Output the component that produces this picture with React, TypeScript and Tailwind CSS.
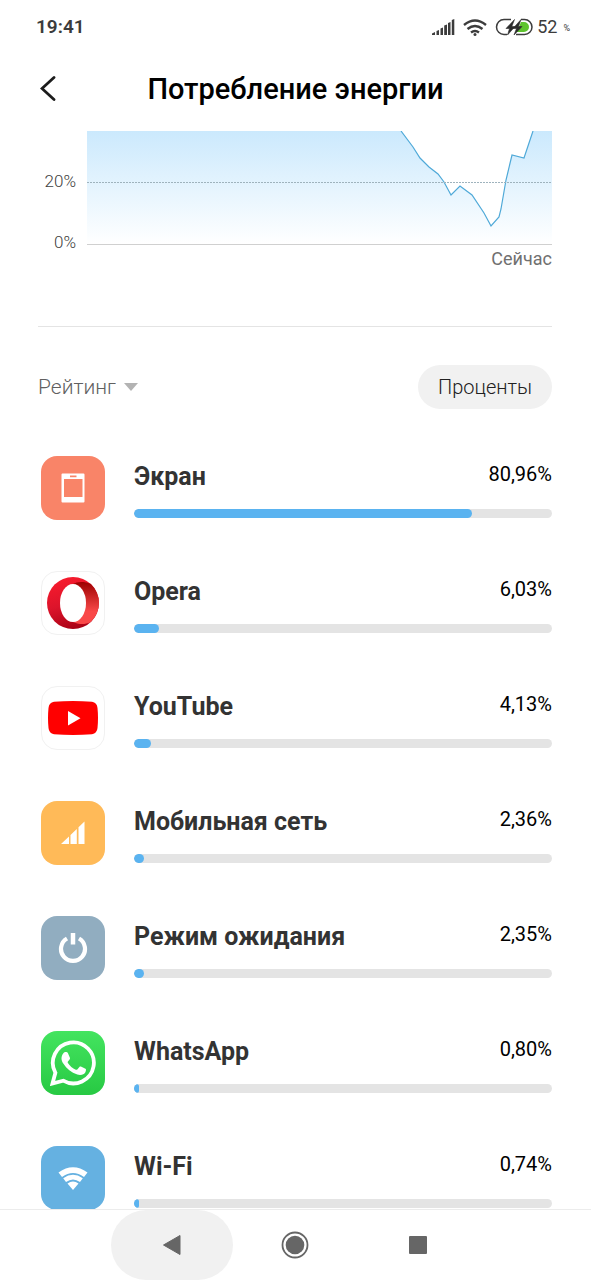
import type { ReactNode } from 'react';

interface UsageItem {
  name: string;
  percent: number;
  label: string;
  tile: string;
  icon: ReactNode;
}

function OperaIcon() {
  return (
    <svg viewBox="0 0 52 52" className="h-[52px] w-[52px]" aria-hidden="true">
      <defs>
        <linearGradient id="operaLeft" x1="0.3" y1="0" x2="0.6" y2="1">
          <stop offset="0" stopColor="#f81b2d" />
          <stop offset="0.5" stopColor="#dc142b" />
          <stop offset="1" stopColor="#a70014" />
        </linearGradient>
        <linearGradient id="operaRight" x1="0" y1="0" x2="0" y2="1">
          <stop offset="0" stopColor="#9c0000" />
          <stop offset="0.7" stopColor="#f94848" />
          <stop offset="1" stopColor="#f94848" />
        </linearGradient>
      </defs>
      <circle cx="26" cy="26" r="26" fill="url(#operaLeft)" />
      <path
        d="M26 7C30 4.500 37 4 43.500 6.800A26 26 0 0 1 43.500 45.200C38 47.800 31 47.500 26 45Z"
        fill="url(#operaRight)"
      />
      <ellipse cx="26" cy="26" rx="13" ry="19" fill="#fff" />
    </svg>
  );
}

function ScreenIcon() {
  return (
    <svg viewBox="0 0 24 30" className="h-[30px] w-6" aria-hidden="true">
      <path
        fillRule="evenodd"
        fill="#fff"
        d="M1.500 .5h21a1 1 0 0 1 1 1v27a1 1 0 0 1-1 1H1.500a1 1 0 0 1-1-1V1.500a1 1 0 0 1 1-1ZM9 2.500v1.800h6.500V2.500ZM3 6v18h18.500V6Z"
      />
    </svg>
  );
}

function YouTubeIcon() {
  return (
    <svg viewBox="0 0 50 34" className="h-[34px] w-[50px]" aria-hidden="true">
      <path
        d="M6 .8Q25-.8 44 .8Q49 1.500 49.500 7Q50.500 17 49.500 27Q49 32.500 44 33.200Q25 34.800 6 33.200Q1 32.500.5 27Q-.5 17 .5 7Q1 1.500 6 .8Z"
        fill="#f00"
      />
      <path d="M20 10v14.500l12.500-7.200Z" fill="#fff" />
    </svg>
  );
}

function MobileIcon() {
  return (
    <svg viewBox="0 0 24 24" className="h-6 w-6" fill="#fff" aria-hidden="true">
      <path d="M0 23L8 15.500V23ZM9.500 14L15.800 8V23H9.500ZM17.500 6.300L23.500 .5V23H17.500Z" />
    </svg>
  );
}

function PowerIcon() {
  return (
    <svg viewBox="0 0 30 30" className="h-[30px] w-[30px]" fill="none" stroke="#fff" aria-hidden="true">
      <path d="M9 5.500A12 12 0 1 0 21 5.500" strokeWidth="4.200" />
      <path d="M15 0v11.500" strokeWidth="4.500" />
    </svg>
  );
}

function WhatsAppIcon() {
  return (
    <svg viewBox="0 0 46 46" className="h-[46px] w-[46px]" aria-hidden="true">
      <path
        d="M2.500 43.500L5.400 32.800A20.500 20.500 0 1 1 13.200 40.700Z"
        fill="none"
        stroke="#fff"
        strokeWidth="3.800"
      />
      <path
        d="M13.200 13.500C14.200 12 15.800 11.800 17 12.200C17.800 12.500 18 13.200 18.400 14.200L19.900 17.800C20.200 18.600 19.900 19.200 19.400 19.800L17.900 21.600C17.500 22.100 17.600 22.500 17.900 23C19.800 26 22.500 28.300 25.800 29.700C26.400 30 26.900 29.900 27.300 29.400L29.400 26.900C29.800 26.400 30.300 26.300 30.900 26.500L35 28.500C35.700 28.900 36 29.100 36 29.700C35.900 31.500 35.200 33 33.800 33.900C31.800 35.200 29.600 35.300 27.300 34.600C21.300 32.800 16.700 29 13.300 23.600C10.800 19.900 11.100 16.200 13.200 13.500Z"
        fill="#fff"
      />
    </svg>
  );
}

function WifiTileIcon() {
  return (
    <svg viewBox="0 0 30 24" className="h-6 w-[30px]" fill="#fff" aria-hidden="true">
      <path d="M.5 6.500Q15-4 29.500 6.500L26 11Q15 3 4 11Z" />
      <path d="M5.200 12.300Q15 5.400 24.800 12.300L22 16Q15 11 8 16Z" />
      <path d="M9.500 17.500Q15 13.600 20.500 17.500L15 24Z" />
    </svg>
  );
}

const items: UsageItem[] = [
  { name: 'Экран', percent: 80.96, label: '80,96%', tile: 'bg-[#f98468]', icon: <ScreenIcon /> },
  { name: 'Opera', percent: 6.03, label: '6,03%', tile: 'border border-[#f1f1f1] bg-white', icon: <OperaIcon /> },
  { name: 'YouTube', percent: 4.13, label: '4,13%', tile: 'border border-[#f1f1f1] bg-white', icon: <YouTubeIcon /> },
  { name: 'Мобильная сеть', percent: 2.36, label: '2,36%', tile: 'bg-[#ffba58]', icon: <MobileIcon /> },
  { name: 'Режим ожидания', percent: 2.35, label: '2,35%', tile: 'bg-[#91adc0]', icon: <PowerIcon /> },
  {
    name: 'WhatsApp',
    percent: 0.8,
    label: '0,80%',
    tile: 'bg-linear-to-b from-[#43e45f] to-[#27c943]',
    icon: <WhatsAppIcon />,
  },
  { name: 'Wi-Fi', percent: 0.74, label: '0,74%', tile: 'bg-[#65b1e1]', icon: <WifiTileIcon /> },
];

function StatusBar() {
  return (
    <div className="flex h-[54px] shrink-0 items-center justify-between pr-[21px] pl-9 text-[#3c3c3c]">
      <span className="text-[19px] font-semibold">19:41</span>
      <div className="flex items-center">
        <svg viewBox="0 0 23 16" className="h-4 w-[23px]" fill="#3c3c3c" aria-hidden="true">
          <path d="M0 16V14.500L3 13V16ZM4.500 16V12L7 11V16ZM8.500 16V9.500L11 8.500V16ZM12.200 16V6.500L15 5.500V16ZM16 16V4L18.500 3V16ZM19.800 16V1L22.300 0V16Z" />
        </svg>
        <svg
          viewBox="0 0 24 17"
          className="ml-2 h-[17px] w-6"
          fill="none"
          stroke="#3c3c3c"
          strokeWidth="2.400"
          aria-hidden="true"
        >
          <path d="M1 6Q12-3 23 6M4.500 10Q12 4 19.500 10M8 13.500Q12 10.500 16 13.500" />
          <circle cx="12" cy="15.500" r="1.500" fill="#3c3c3c" stroke="none" />
        </svg>
        <svg viewBox="0 0 38 18" className="ml-2 h-[18px] w-[38px]" aria-hidden="true">
          <path
            d="M16 1.500H9A7.500 7.500 0 0 0 9 16.500H12M26 1.500H29.500A7.500 7.500 0 0 1 29.500 16.500H21"
            fill="none"
            stroke="#3c3c3c"
            strokeWidth="1.500"
          />
          <path d="M26 4H29A5 5 0 0 1 29 14H21L24 9Z" fill="#5ec42e" />
          <path
            d="M19.500 1.500L11 10.500H14.500L12.500 17L20 8.500H16.800ZM26 1.500L18 10.500H21.500L19 17L27 8.500H23.500Z"
            fill="#2c2c2c"
            stroke="#2c2c2c"
            strokeWidth=".6"
          />
        </svg>
        <span className="ml-1 text-lg">52</span>
        <span className="ml-1.5 pt-1 text-[9px]">%</span>
      </div>
    </div>
  );
}

function BatteryChart() {
  return (
    <section className="flex gap-[11px]" aria-label="Уровень заряда">
      <div className="flex w-[38px] shrink-0 flex-col gap-[39px] pt-[39px] text-right text-[17px]/[22px] font-light text-[#404040]">
        <span>20%</span>
        <span>0%</span>
      </div>
      <div className="flex min-w-0 flex-1 flex-col gap-0.5">
        <svg viewBox="0 0 465 114" preserveAspectRatio="none" className="h-[114px] w-full" aria-hidden="true">
          <defs>
            <linearGradient id="charge" x1="0" y1="0" x2="0" y2="1">
              <stop offset="0" stopColor="#cbe9fd" />
              <stop offset="1" stopColor="#fff" />
            </linearGradient>
          </defs>
          <path
            d="M0 0H314L326 16L333 27L342 36L351 43L357 51L364 64L373 55L385 64L397 82L404 95L412 86L414 78L419 49L425 24L437 27L441 15L446 0H465V113H0Z"
            fill="url(#charge)"
          />
          <path
            d="M314 0L326 16L333 27L342 36L351 43L357 51L364 64L373 55L385 64L397 82L404 95L412 86L414 78L419 49L425 24L437 27L441 15L446 0"
            fill="none"
            stroke="#4fa9d8"
            strokeWidth="1.200"
          />
          <path d="M0 51.500H465" stroke="#9fb3bd" strokeDasharray="2 1" />
          <path d="M0 113.500H465" stroke="#d0d0d0" />
        </svg>
        <span className="text-right text-lg/6 text-[#707070]">Сейчас</span>
      </div>
    </section>
  );
}

function UsageRow({ item }: { item: UsageItem }) {
  return (
    <li className="flex h-16 gap-[29px]">
      <div className={`flex h-16 w-16 shrink-0 items-center justify-center rounded-2xl ${item.tile}`}>{item.icon}</div>
      <div className="flex min-w-0 flex-1 flex-col gap-4 pt-[5px]">
        <div className="flex items-start justify-between">
          <h2 className="text-[25px]/8 font-bold text-[#333]">{item.name}</h2>
          <span className="text-xl/[26px] text-black">{item.label}</span>
        </div>
        <div className="h-[9px] overflow-hidden rounded-full bg-[#e4e4e4]">
          <div className="h-full min-w-[5px] rounded-full bg-[#5ab3f0]" style={{ width: `${item.percent}%` }} />
        </div>
      </div>
    </li>
  );
}

function NavBar() {
  return (
    <nav className="flex h-[71px] shrink-0 justify-center gap-px border-t border-[#ececec] bg-white pr-0.5">
      <button type="button" aria-label="Назад" className="flex w-[122px] items-center justify-center rounded-full bg-[#f1f1f1]">
        <svg viewBox="0 0 18 20" className="h-5 w-[18px]" aria-hidden="true">
          <path d="M17 .5V19.500L.5 10Z" fill="#666" stroke="#666" strokeLinejoin="round" />
        </svg>
      </button>
      <button type="button" aria-label="Домой" className="flex w-[122px] items-center justify-center">
        <svg viewBox="0 0 28 28" className="h-7 w-7" aria-hidden="true">
          <circle cx="14" cy="14" r="12.500" fill="none" stroke="#666" strokeWidth="1.800" />
          <circle cx="14" cy="14" r="9.300" fill="#666" />
        </svg>
      </button>
      <button type="button" aria-label="Недавние" className="flex w-[122px] items-center justify-center">
        <span className="h-[18px] w-[18px] rounded-[1px] bg-[#666]" />
      </button>
    </nav>
  );
}

export default function App() {
  return (
    <div className="flex h-screen flex-col bg-white font-[Roboto,sans-serif]">
      <StatusBar />
      <header className="grid h-[77px] shrink-0 grid-cols-[48px_1fr_48px] items-center px-6 pb-2">
        <button type="button" aria-label="Назад" className="flex h-12 w-12 items-center justify-center">
          <svg viewBox="0 0 16 26" className="h-[26px] w-4" fill="none" stroke="#1c1c1c" strokeWidth="2.800" strokeLinecap="round" aria-hidden="true">
            <path d="M14 1.500L2 12.500L14 23.500" />
          </svg>
        </button>
        <h1 className="text-center text-[29px]/9 font-medium text-black">Потребление энергии</h1>
      </header>

      <main className="min-h-0 flex-1 overflow-y-auto pr-[39px] pl-[38px] [scrollbar-width:none]">
        <BatteryChart />
        <hr className="mt-[55px] border-[#e4e4e4]" />

        <div className="mt-[38px] flex h-11 items-center justify-between">
          <label className="flex items-center gap-2">
            <select aria-label="Сортировка" className="appearance-none bg-transparent text-[21px]/7 font-light text-[#606060]">
              <option>Рейтинг</option>
            </select>
            <svg viewBox="0 0 14 8" className="h-2 w-3.5" aria-hidden="true">
              <path d="M0 0H14L7 8Z" fill="#b3b3b3" />
            </svg>
          </label>
          <button type="button" className="h-11 rounded-full bg-[#f1f1f1] px-5 text-xl font-light text-[#202020]">
            Проценты
          </button>
        </div>

        <ul className="mt-[47px] flex flex-col gap-[51px] pl-[3px]">
          {items.map((item) => (
            <UsageRow key={item.name} item={item} />
          ))}
        </ul>
      </main>
      <NavBar />
    </div>
  );
}
